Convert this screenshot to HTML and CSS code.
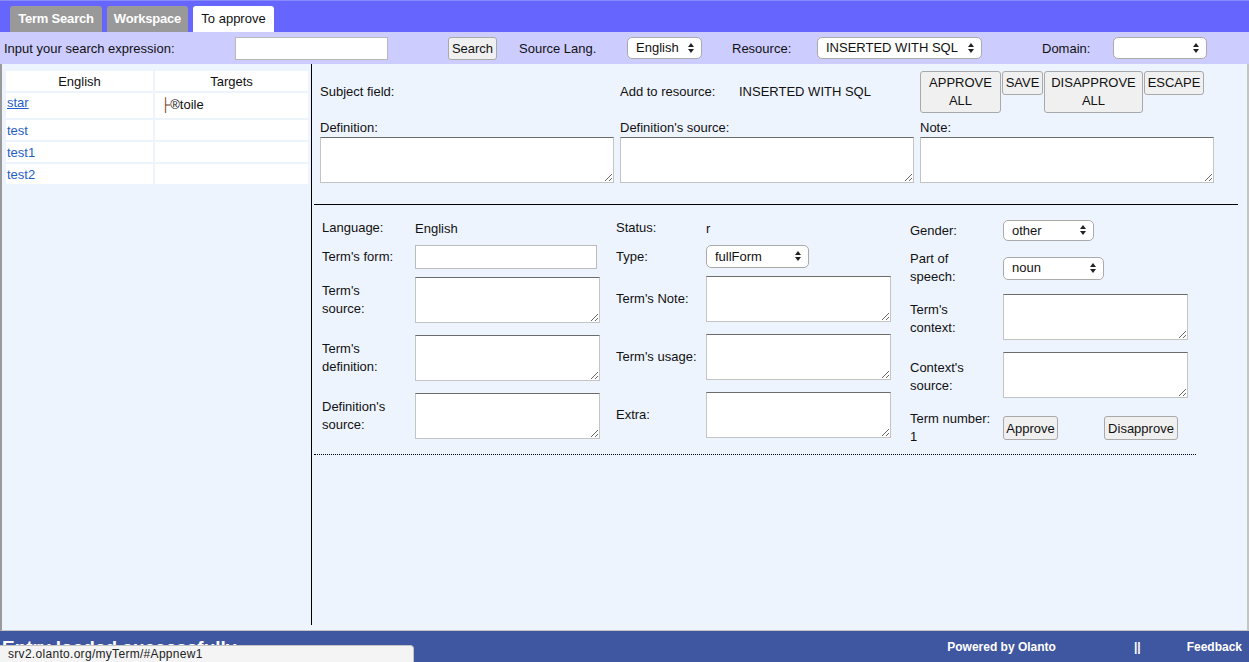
FILE: index.html
```html
<!DOCTYPE html>
<html>
<head>
<meta charset="utf-8">
<link rel="stylesheet" href="styles.css">
</head>
<body>
<div class="topbar">
  <div class="tab t1">Term Search</div>
  <div class="tab t2">Workspace</div>
  <div class="tab t3 active">To approve</div>
</div>
<div class="searchbar">
  <div class="c-label">Input your search expression:</div>
  <input class="search-input" type="text">
  <button class="btn btn-search">Search</button>
  <div class="c-src">Source Lang.</div>
  <div class="sel sel-lang"><select><option>English</option></select></div>
  <div class="c-res">Resource:</div>
  <div class="sel sel-res"><select><option>INSERTED WITH SQL</option></select></div>
  <div class="c-dom">Domain:</div>
  <div class="sel sel-dom"><select><option></option></select></div>
</div>
<div class="main">
  <div class="left">
    <table class="terms">
      <tr class="hdr"><td>English</td><td>Targets</td></tr>
      <tr class="first"><td><a class="lnk ul" href="#">star</a></td><td class="tgt"><span class="cur">├</span>®toile</td></tr>
      <tr><td><a class="lnk" href="#">test</a></td><td></td></tr>
      <tr><td><a class="lnk" href="#">test1</a></td><td></td></tr>
      <tr><td><a class="lnk" href="#">test2</a></td><td></td></tr>
    </table>
  </div>
  <div class="right">
    <div class="top">
      <div class="subj">Subject field:</div>
      <div class="addres"><span class="addlbl">Add to resource:</span><span>INSERTED WITH SQL</span></div>
      <div class="actions">
        <button class="btn abtn w80">APPROVE ALL</button>
        <button class="btn abtn w40">SAVE</button>
        <button class="btn abtn w98">DISAPPROVE ALL</button>
        <button class="btn abtn w59">ESCAPE</button>
      </div>
      <div class="fld"><div class="flbl">Definition:</div><textarea class="ta-wide"></textarea></div>
      <div class="fld"><div class="flbl">Definition's source:</div><textarea class="ta-wide"></textarea></div>
      <div class="fld"><div class="flbl">Note:</div><textarea class="ta-wide"></textarea></div>
    </div>
    <div class="solid-line"></div>
    <div class="term">
      <div class="col col1">
        <div class="row r1"><div class="lbl">Language:</div><div>English</div></div>
        <div class="row r2"><div class="lbl">Term's form:</div><input class="form-input" type="text"></div>
        <div class="row r3"><div class="lbl">Term's<br>source:</div><textarea class="ta"></textarea></div>
        <div class="row r4"><div class="lbl">Term's<br>definition:</div><textarea class="ta"></textarea></div>
        <div class="row r4"><div class="lbl">Definition's<br>source:</div><textarea class="ta"></textarea></div>
      </div>
      <div class="col col2">
        <div class="row r1"><div class="lbl">Status:</div><div>r</div></div>
        <div class="row r2b"><div class="lbl">Type:</div><div class="sel sel-type"><select><option>fullForm</option></select></div></div>
        <div class="row r3"><div class="lbl">Term's Note:</div><textarea class="ta"></textarea></div>
        <div class="row r4"><div class="lbl">Term's usage:</div><textarea class="ta"></textarea></div>
        <div class="row r4"><div class="lbl">Extra:</div><textarea class="ta"></textarea></div>
      </div>
      <div class="col col3">
        <div class="row g1"><div class="lbl">Gender:</div><div class="sel sel-gen"><select><option>other</option></select></div></div>
        <div class="row g2"><div class="lbl">Part of<br>speech:</div><div class="sel sel-pos"><select><option>noun</option></select></div></div>
        <div class="row g3"><div class="lbl lbl-low">Term's<br>context:</div><textarea class="ta"></textarea></div>
        <div class="row r4"><div class="lbl lbl-low">Context's<br>source:</div><textarea class="ta"></textarea></div>
        <div class="row g5"><div class="lbl">Term number:<br>1</div><button class="btn b-appr">Approve</button><button class="btn b-dis">Disapprove</button></div>
      </div>
    </div>
    <div class="dotted-line"></div>
  </div>
</div>
<div class="footer">
  <div class="status">Entry loaded successfully</div>
  <div class="foot-right">
    <span class="powered">Powered by Olanto</span>
    <span class="sep">||</span>
    <span class="feedback">Feedback</span>
  </div>
  <div class="urlbubble">srv2.olanto.org/myTerm/#Appnew1</div>
</div>
</body>
</html>
```
FILE: styles.css
```css
* { box-sizing: border-box; }
html, body { margin: 0; padding: 0; }
body {
  width: 1249px;
  height: 662px;
  overflow: hidden;
  font-family: "Liberation Sans", Arial, sans-serif;
  font-size: 13px;
  color: #111;
  background: #eef4fe;
  position: relative;
}
button, input, select, textarea { font-family: "Liberation Sans", Arial, sans-serif; font-size: 13px; color: #111; margin: 0; }

.topbar {
  height: 32px;
  background: #6666ff;
  display: flex;
  align-items: flex-end;
  padding-left: 10px;
  gap: 5px;
  border-top: 1px solid #8a8aff;
}
.tab {
  height: 26px;
  line-height: 25px;
  padding: 0;
  text-align: center;
  background: #999999;
  color: #fff;
  font-weight: bold;
  border-radius: 3px 3px 0 0;
  white-space: nowrap;
  letter-spacing: -0.2px;
}
.t1 { width: 92px; }
.t2 { width: 81px; }
.t3 { width: 81px; }
.tab.active { background: #fff; color: #111; font-weight: normal; letter-spacing: 0; }

.searchbar {
  height: 32px;
  background: #ccccff;
  display: flex;
  align-items: center;
}
.c-label { width: 235px; padding-left: 4px; }
.search-input {
  width: 153px; height: 23px;
  border: 1px solid #b8b8b8;
  background: #fff;
}
.btn {
  background: #f0f0f0;
  border: 1px solid #a9a9a9;
  border-radius: 3px;
  padding: 0;
  cursor: pointer;
}
.btn-search { margin-left: 60px; width: 49px; height: 23px; }
.c-src { margin-left: 22px; width: 108px; }
.c-res { margin-left: 30px; width: 85px; }
.c-dom { margin-left: 60px; width: 71px; }

.sel { position: relative; display: inline-block; height: 22px; }
.sel select {
  -webkit-appearance: none;
  appearance: none;
  width: 100%;
  height: 100%;
  border: 1px solid #aaaaaa;
  border-radius: 5px;
  background: #fff;
  padding: 0 18px 0 8px;
  line-height: 20px;
}
.sel::before, .sel::after {
  content: "";
  position: absolute;
  right: 8px;
  width: 0; height: 0;
  border-left: 3px solid transparent;
  border-right: 3px solid transparent;
  pointer-events: none;
}
.sel::before { top: 6px; border-bottom: 4px solid #222; }
.sel::after { top: 12px; border-top: 4px solid #222; }
.sel-lang { width: 75px; }
.sel-res { width: 165px; }
.sel-dom { width: 94px; }
.sel-type { width: 103px; height: 23px; }
.sel-gen { width: 91px; height: 21px; }
.sel-pos { width: 101px; height: 23px; }
.sel-gen::before { top: 5px; }
.sel-gen::after { top: 11px; }

.main {
  height: 567px;
  display: flex;
  align-items: flex-start;
  border-left: 2px solid #9a9a9a;
  border-right: 2px solid #c4c4c4;
  border-bottom: 1px solid #c6c6c6;
}
.left {
  width: 310px;
  height: 561px;
  border-right: 1px solid #000;
  padding-top: 5px;
  padding-left: 2px;
}
.terms {
  width: 306px;
  border-spacing: 2px;
}
.terms td {
  background: #fff;
  height: 20px;
  padding: 0 1px;
}
.terms td:first-child { width: 147px; }
.terms .hdr td { text-align: center; }
.terms .first td { height: 25px; vertical-align: top; padding-top: 2px; }
.terms .first td.tgt { padding-top: 4px; padding-left: 6px; }
.cur { color: #7a3d10; font-weight: normal; }
.lnk { color: #1f5ec8; text-decoration: none; }
.lnk.ul { text-decoration: underline; }

.right { flex: 1; padding-top: 7px; padding-left: 8px; }
.top {
  display: grid;
  grid-template-columns: 300px 300px 300px;
  grid-template-rows: 41px auto;
}
.subj, .addres { align-self: center; }
.addlbl { display: inline-block; width: 119px; }
.actions { display: flex; gap: 1px; align-items: flex-start; }
.abtn { line-height: 18px; padding: 2px 0; text-align: center; }
.w80 { width: 81px; }
.w40 { width: 41px; }
.w98 { width: 99px; }
.w59 { width: 60px; }
.fld { padding-top: 8px; }
.flbl { height: 16px; line-height: 16px; margin-bottom: 1px; }
textarea {
  display: block;
  background: #fff;
  border: 1px solid #c4c4c4;
  border-top-color: #6c6c6c;
  padding: 2px;
  resize: both;
}
.ta-wide { width: 294px; height: 46px; }
.ta { width: 185px; height: 46px; }

.solid-line {
  margin-top: 21px;
  margin-left: -6px;
  width: 924px;
  border-top: 1px solid #000;
}
.term {
  display: flex;
  margin-left: -6px;
}
.col { width: 294px; padding-left: 8px; padding-top: 13px; }
.row { display: flex; align-items: center; }
.lbl { width: 93px; line-height: 18px; flex: none; }
.col2 .lbl { width: 90px; }
.r1 { height: 20px; }
.r2 { margin-top: 7px; height: 24px; }
.r2b { margin-top: 7px; height: 23px; }
.r3 { margin-top: 8px; }
.r4 { margin-top: 12px; }
.form-input {
  width: 182px; height: 24px;
  border: 1px solid #bcbcbc;
  background: #fff;
}
.g1 { margin-top: 2px; height: 21px; }
.g2 { margin-top: 9px; height: 36px; }
.g3 { margin-top: 8px; }
.lbl-low { padding-top: 3px; }
.g5 { margin-top: 12px; height: 36px; }
.b-appr { width: 55px; height: 24px; }
.b-dis { width: 74px; height: 24px; margin-left: 46px; }

.dotted-line {
  margin-top: 8px;
  margin-left: -6px;
  width: 882px;
  border-top: 1px dotted #000;
}

.footer {
  height: 31px;
  background: #3f56a0;
  color: #fff;
  display: flex;
  align-items: center;
  position: relative;
  overflow: hidden;
}
.status {
  font-weight: bold;
  font-size: 19px;
  padding-left: 2px;
  margin-top: 2px;
  white-space: nowrap;
}
.foot-right {
  margin-left: auto;
  display: flex;
  font-weight: bold;
  font-size: 12px;
  padding-right: 7px;
}
.powered { margin-right: 78px; }
.sep { margin-right: 46px; }
.urlbubble {
  position: absolute;
  left: 0;
  bottom: 0;
  width: 414px;
  height: 17px;
  background: #f4f4f4;
  border: 1px solid #c4c4c4;
  border-left: none;
  border-bottom: none;
  border-top-right-radius: 4px;
  color: #222;
  font-size: 12px;
  line-height: 16px;
  padding-left: 8px;
  letter-spacing: 0.3px;
}
```
